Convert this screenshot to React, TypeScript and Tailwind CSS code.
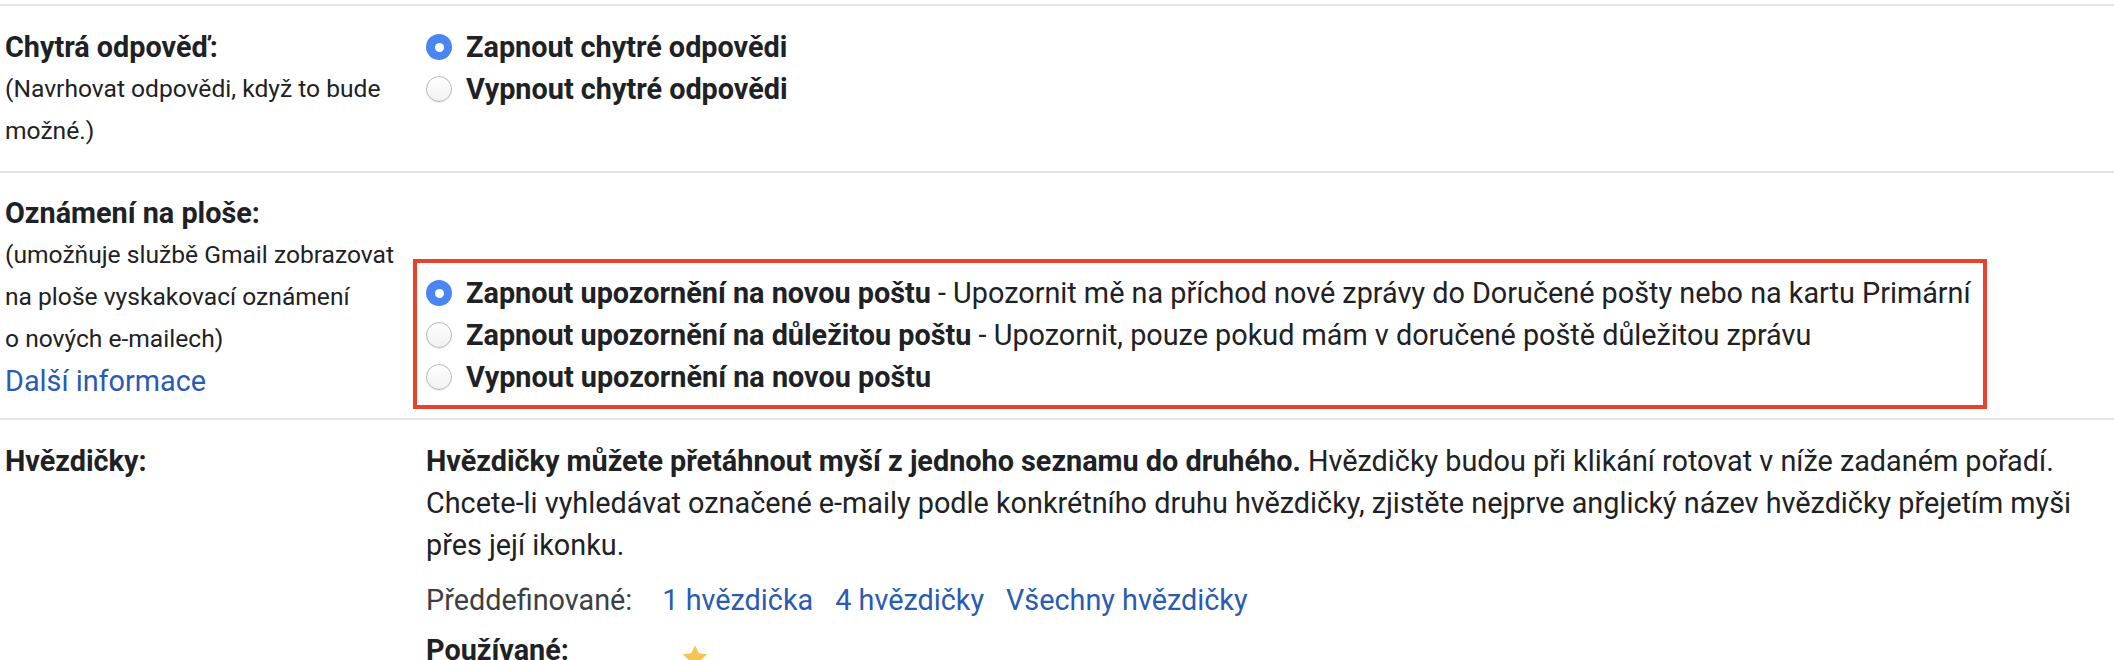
import React from "react";

function Radio({ checked }: { checked?: boolean }) {
  if (checked) {
    return (
      <span className="flex h-[26px] w-[26px] shrink-0 items-center justify-center rounded-full bg-[#4a86f0]">
        <span className="h-[9px] w-[9px] rounded-full bg-white" />
      </span>
    );
  }
  return (
    <span className="h-[26px] w-[26px] shrink-0 rounded-full border-[1.5px] border-[#b9b9b9] bg-gradient-to-b from-white to-[#f1f1f1] shadow-[0_1px_1px_rgba(0,0,0,0.08)]" />
  );
}

function RadioRow({ checked, children }: { checked?: boolean; children: React.ReactNode }) {
  return (
    <div className="flex items-center gap-[14px] whitespace-nowrap">
      <Radio checked={checked} />
      <span>{children}</span>
    </div>
  );
}

export default function App() {
  return (
    <div className="h-[660px] w-[2114px] overflow-hidden bg-white pt-[4px] font-['Roboto',_'Noto_Sans',_sans-serif] text-[28.8px] leading-[42px] text-[#202124]">
      {/* Section 1 */}
      <div className="flex border-t-2 border-[#e3e3e3] pb-[19px] pt-[20px]">
        <div className="w-[426px] shrink-0 pl-[5px]">
          <div className="font-bold">Chytrá odpověď:</div>
          <div className="text-[24.6px]">
            (Navrhovat odpovědi, když to bude
            <br />
            možné.)
          </div>
        </div>
        <div className="flex-1">
          <RadioRow checked>
            <b>Zapnout chytré odpovědi</b>
          </RadioRow>
          <RadioRow>
            <b>Vypnout chytré odpovědi</b>
          </RadioRow>
        </div>
      </div>

      {/* Section 2 */}
      <div className="flex border-t-2 border-[#e3e3e3] pb-[9px] pt-[19px]">
        <div className="w-[426px] shrink-0 pl-[5px]">
          <div className="font-bold">Oznámení na ploše:</div>
          <div className="text-[24.6px]">
            (umožňuje službě Gmail zobrazovat
            <br />
            na ploše vyskakovací oznámení
            <br />o nových e-mailech)
          </div>
          <div className="text-[#2a5bb2]">Další informace</div>
        </div>
        <div className="flex-1">
          <div className="-ml-[13px] mt-[67px] w-[1574px] border-4 border-[#e5432d] pb-[7px] pl-[9px] pt-[9px]">
            <RadioRow checked>
              <b>Zapnout upozornění na novou poštu</b> - Upozornit mě na příchod nové zprávy do Doručené pošty nebo na kartu Primární
            </RadioRow>
            <RadioRow>
              <b>Zapnout upozornění na důležitou poštu</b> - Upozornit, pouze pokud mám v doručené poště důležitou zprávu
            </RadioRow>
            <RadioRow>
              <b>Vypnout upozornění na novou poštu</b>
            </RadioRow>
          </div>
        </div>
      </div>

      {/* Section 3 */}
      <div className="flex border-t-2 border-[#e3e3e3] pt-[20px]">
        <div className="w-[426px] shrink-0 pl-[5px]">
          <div className="font-bold">Hvězdičky:</div>
        </div>
        <div className="flex-1">
          <div className="whitespace-nowrap">
            <b>Hvězdičky můžete přetáhnout myší z jednoho seznamu do druhého.</b> Hvězdičky budou při klikání rotovat v níže zadaném pořadí.
            <br />
            Chcete-li vyhledávat označené e-maily podle konkrétního druhu hvězdičky, zjistěte nejprve anglický název hvězdičky přejetím myši
            <br />
            přes její ikonku.
          </div>
          <div className="mt-[13px] flex gap-[30px] text-[#3c4043]">
            <span>Předdefinované:</span>
            <span className="flex gap-[22px] text-[#2a5bb2]">
              <span>1 hvězdička</span>
              <span>4 hvězdičky</span>
              <span>Všechny hvězdičky</span>
            </span>
          </div>
          <div className="mt-[8px] flex items-start">
            <span className="w-[254px] shrink-0 font-bold">Používané:</span>
            <svg width="30" height="30" viewBox="0 0 24 24" className="mt-[14px]">
              <path
                d="M12 1.8l3 6.3 6.8.8-5 4.7 1.3 6.8L12 17l-6.1 3.4 1.3-6.8-5-4.7 6.8-.8z"
                fill="#f5c453"
              />
            </svg>
          </div>
        </div>
      </div>
    </div>
  );
}
